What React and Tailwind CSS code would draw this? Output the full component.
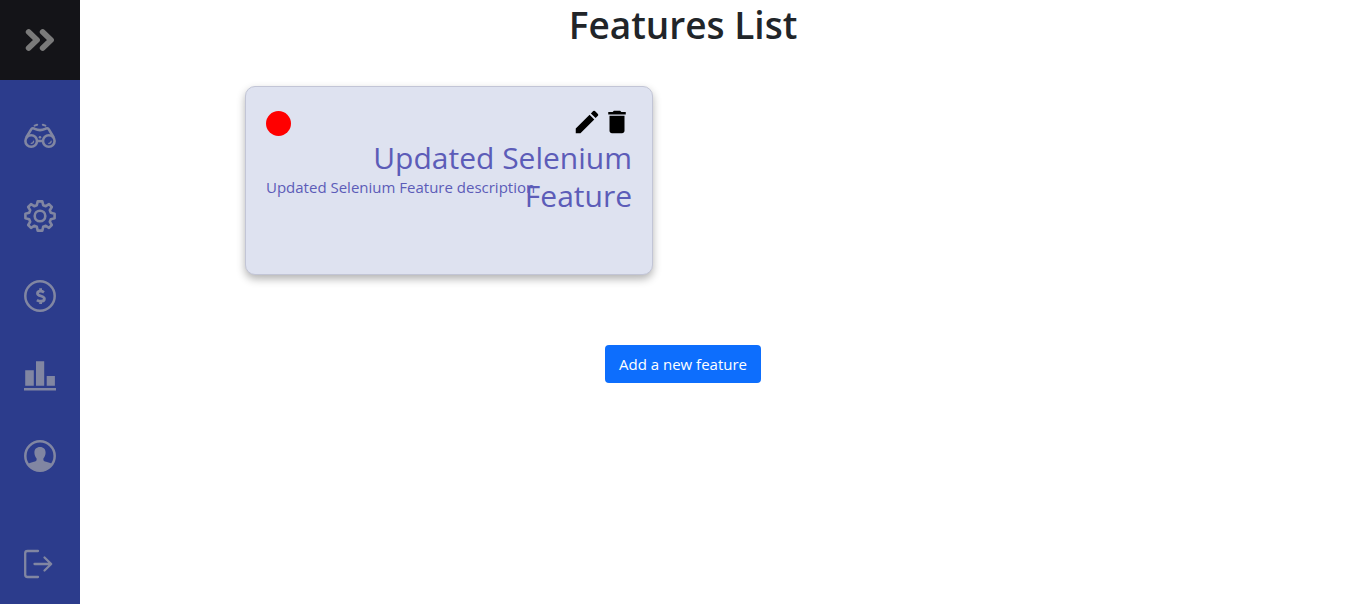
import React from "react";
import { MdDelete, MdEdit } from "react-icons/md";

function ChevronsIcon() {
  return (
    <svg viewBox="0 0 32 32" className="size-8" fill="none" stroke="currentColor" strokeWidth="5.8" strokeLinecap="round" strokeLinejoin="round" aria-hidden="true">
      <path d="M4.7 8l8.3 8-8.3 8M18.7 8l8.3 8-8.3 8" />
    </svg>
  );
}

function BinocularsIcon() {
  return (
    <svg viewBox="0 0 32 32" className="size-8" fill="none" stroke="currentColor" strokeWidth="2.6" strokeLinecap="round" strokeLinejoin="round" aria-hidden="true">
      <circle cx="7.2" cy="21" r="5.8" />
      <circle cx="24.8" cy="21" r="5.8" />
      <path d="M2.6 17L7 9.6C8 8 9.4 7.9 10.8 8.9C14 10.4 18 10.4 21.2 8.9C22.600 7.9 24 8 25 9.6L29.4 17" />
      <path d="M13.2 21h5.6" />
      <path d="M10.6 5.600l2.600-.9M21.400 5.600l-2.600-.9" strokeWidth="2" />
      <path d="M9.6 21c0 1.4-1 2.4-2.4 2.4M27.2 21c0 1.4-1 2.4-2.4 2.4" strokeWidth="1.2" />
      <circle cx="16" cy="17.2" r="1.3" fill="currentColor" stroke="none" />
    </svg>
  );
}

function GearIcon() {
  return (
    <svg viewBox="0 0 32 32" className="size-8" fill="none" stroke="currentColor" strokeWidth="2.6" strokeLinejoin="round" aria-hidden="true">
      <path d="M13.7 1.4L18.3 1.4L19.2 5.2L21.8 6.2L25 4.2L27.8 7L25.8 10.2L26.8 12.8L30.6 13.7L30.6 18.3L26.8 19.2L25.8 21.8L27.8 25L25 27.8L21.8 25.8L19.2 26.8L18.3 30.6L13.7 30.6L12.8 26.8L10.2 25.8L7 27.8L4.2 25L6.2 21.8L5.2 19.2L1.4 18.3L1.4 13.7L5.2 12.8L6.2 10.2L4.2 7L7 4.2L10.2 6.2L12.8 5.2Z" />
      <circle cx="16" cy="16" r="5.3" />
    </svg>
  );
}

function DollarIcon() {
  return (
    <svg viewBox="0 0 32 32" className="size-8" fill="none" stroke="currentColor" strokeWidth="2.5" aria-hidden="true">
      <circle cx="16" cy="16" r="14.7" />
      <path d="M20 12.3c-1.2-.8-2.3-1.1-3.5-1.1-1.9 0-3 .9-3 2.2 0 3.3 6.9 1.9 6.9 5.3 0 1.6-1.4 2.5-3.5 2.5-1.5 0-2.900-.4-4-1.1M16.6 8.2v3M16.6 21v3" strokeWidth="2.8" />
    </svg>
  );
}

function ChartIcon() {
  return (
    <svg viewBox="0 0 32 32" className="size-8" fill="currentColor" aria-hidden="true">
      <path d="M1.2 10.2h8.6v15.6H1.2zM12 1.2h8.2v24.6H12zM22.7 16h8.2v9.8h-8.2zM0 28h32v2.6H0z" />
    </svg>
  );
}

function UserIcon() {
  return (
    <svg viewBox="0 0 32 32" className="size-8" fill="none" aria-hidden="true">
      <circle cx="16" cy="16" r="14.7" stroke="currentColor" strokeWidth="2.5" />
      <path fill="currentColor" d="M16 7c3.6 0 5.6 2.2 5.6 5.6 0 2.4-.9 4.6-2.2 5.9v1.3c0 1.1.9 1.5 2.7 2 2.2.6 4.6 1.1 5.7 2.3C25.2 28.2 20.8 30.8 16 30.8S6.8 28.2 4.2 24.1c1.1-1.2 3.5-1.7 5.7-2.3 1.8-.5 2.7-.9 2.7-2v-1.3c-1.3-1.3-2.2-3.5-2.2-5.9C10.4 9.2 12.4 7 16 7z" />
    </svg>
  );
}

function LogoutIcon() {
  return (
    <svg viewBox="0 0 32 32" className="size-8" fill="none" stroke="currentColor" strokeWidth="2.3" strokeLinecap="round" strokeLinejoin="round" aria-hidden="true">
      <path d="M14 3H3.5C2 3 1.2 3.8 1.2 5.2v21.6C1.2 28.2 2 29 3.5 29H14M10.5 16h16.5M20.5 9.5l6.7 6.5-6.7 6.5" />
    </svg>
  );
}

const links = [
  { label: "Explore", Icon: BinocularsIcon },
  { label: "Settings", Icon: GearIcon },
  { label: "Pricing", Icon: DollarIcon },
  { label: "Statistics", Icon: ChartIcon },
  { label: "Profile", Icon: UserIcon },
];

const features = [
  { title: "Updated Selenium Feature", description: "Updated Selenium Feature description" },
];

function Sidebar() {
  return (
    <nav aria-label="Main" className="flex w-20 shrink-0 flex-col bg-[#2c3c8c] text-[#8186a2]">
      <button type="button" aria-label="Expand menu" className="flex h-20 items-center justify-center bg-[#141418] text-[#7a7a7a]">
        <ChevronsIcon />
      </button>
      <ul className="mt-4">
        {links.map(({ label, Icon }) => (
          <li key={label}>
            <a href="#" aria-label={label} className="flex h-20 items-center justify-center">
              <Icon />
            </a>
          </li>
        ))}
      </ul>
      <a href="#" aria-label="Log out" className="mt-auto flex h-20 items-center justify-center">
        <LogoutIcon />
      </a>
    </nav>
  );
}

function FeatureCard({ title, description }) {
  return (
    <article className="min-h-[189px] rounded-[10px] border border-[#c2c5d6] bg-[#dee2f0] p-5 text-[#5c5cb8] shadow-[0_4px_8px_rgba(0,0,0,0.3)]">
      <div className="flex items-start justify-between">
        <span className="mt-1 size-[25px] rounded-full bg-[#ff0000]" />
        <div className="flex text-black">
          <button type="button" aria-label="Edit feature">
            <MdEdit className="size-[30px]" />
          </button>
          <button type="button" aria-label="Delete feature">
            <MdDelete className="size-[30px]" />
          </button>
        </div>
      </div>
      <div className="mt-0.5 grid">
        <h2 className="col-start-1 row-start-1 ml-auto max-w-72 text-right text-[30px] leading-[38px]">{title}</h2>
        <p className="col-start-1 row-start-1 pt-9 text-[15px] leading-6">{description}</p>
      </div>
    </article>
  );
}

export default function App() {
  return (
    <div className="flex min-h-screen bg-white font-['Open_Sans',sans-serif]">
      <Sidebar />
      <main className="flex flex-1 flex-col items-center pr-20">
        <h1 className="text-[37px] font-semibold leading-[50px] text-[#212529]">Features List</h1>
        <div className="mt-9 grid w-full max-w-[876px] grid-cols-2 gap-[60px]">
          {features.map((feature) => (
            <FeatureCard key={feature.title} {...feature} />
          ))}
        </div>
        <button type="button" className="mt-[70px] rounded-sm bg-[#0d6efd] px-3.5 py-[7px] text-[15px] leading-6 text-white">
          Add a new feature
        </button>
      </main>
    </div>
  );
}
